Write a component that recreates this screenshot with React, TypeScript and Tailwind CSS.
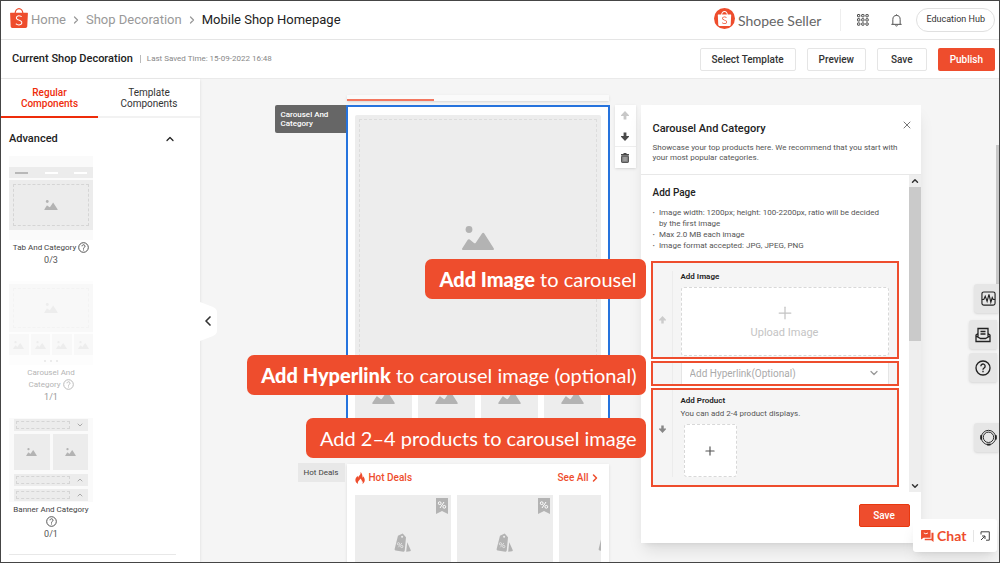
import type { ReactNode } from "react";
import { ChevronDown, ChevronLeft, ChevronRight, ChevronUp, Plus, X } from "lucide-react";
import { SiShopee } from "react-icons/si";

function ImageGlyph({ className }: { className: string }) {
  return (
    <svg viewBox="0 0 32 24" className={className} fill="currentColor" aria-hidden="true">
      <circle cx="7" cy="3.5" r="3.4" />
      <path d="M1.2 24c-1 0-1.5-.9-.9-1.700L5.600 14c.6-.9 1.300-1 2.100-.4L12 17c.7.5 1.300.4 1.800-.3l6.200-9.200c.7-1 1.700-1 2.300 0l9.400 14.700c.6.900.1 1.800-.9 1.800z" />
    </svg>
  );
}

function ArrowGlyph({ className }: { className: string }) {
  return (
    <svg viewBox="0 0 8 9" className={className} fill="currentColor" aria-hidden="true">
      <path d="M4 0L8 4.300V5H5.400V8.600H2.600V5H0V4.300z" />
    </svg>
  );
}

function TrashGlyph() {
  return (
    <svg viewBox="0 0 8 10" className="h-[10px] w-2" aria-hidden="true">
      <path d="M2.500 0h3v1H8v1.500H0V1h2.500z" fill="#4a4a4a" />
      <rect x="0.600" y="3" width="6.800" height="6.400" rx="0.500" fill="#888" stroke="#4a4a4a" />
      <path d="M2.300 5h3.400M2.300 7h3.400" stroke="#bbb" strokeWidth="0.800" />
    </svg>
  );
}

function HelpGlyph({ className }: { className: string }) {
  return (
    <svg viewBox="0 0 24 24" className={className} fill="none" stroke="currentColor" strokeWidth="2" aria-hidden="true">
      <circle cx="12" cy="12" r="10.500" />
      <path d="M8.800 9.300a3.200 3.200 0 1 1 5 2.600c-1.100.8-1.800 1.200-1.800 2.600" />
      <path d="M12 16.300v2.200" />
    </svg>
  );
}

function SaleTag() {
  return (
    <svg viewBox="0 0 18 22" className="h-[21px] w-[17px]" aria-hidden="true">
      <path d="M4.200 2.800L9.200.4l3.500 4-1.300 14.100c-.1.900-.6 1.300-1.400 1.200l-8.300-1.400c-.8-.1-1.200-.7-1-1.500z" fill="#b3b3b3" />
      <circle cx="8.600" cy="3.800" r="1.100" fill="#ededed" />
      <path d="M12.900 19.700L14 9.600l3.700 8.200c.3.700 0 1.200-.7 1.300z" fill="#b3b3b3" />
      <circle cx="4.700" cy="11.300" r="1.200" fill="none" stroke="#ededed" strokeWidth=".8" />
      <circle cx="8.200" cy="14.200" r="1.200" fill="none" stroke="#ededed" strokeWidth=".8" />
      <path d="M8.400 10.500L4.600 15" stroke="#ededed" strokeWidth=".8" />
    </svg>
  );
}

function SaleBadge() {
  return (
    <svg viewBox="0 0 12 16" className="h-4 w-3" aria-hidden="true">
      <path d="M0 0h12v16l-6-3-6 3z" fill="#b3b3b3" />
      <g fill="none" stroke="#fff" strokeWidth="1">
        <circle cx="3.700" cy="5.200" r="1.400" />
        <circle cx="8.300" cy="8.800" r="1.400" />
        <path d="M8 4L4 10" />
      </g>
    </svg>
  );
}

function FlameGlyph() {
  return (
    <svg viewBox="0 0 20 24" className="h-3 w-[10px]" fill="#ee4d2d" aria-hidden="true">
      <path d="M11 0c.8 3.500-.6 5.500-2.600 7.500C7.400 8.600 6.700 9.800 6.600 11 5.600 10.200 5.200 9 5.400 7.600 2 10.600.6 13.600.8 16.700 1 20 3 22.600 6.200 24c-1.400-3 .1-5.400 2.300-7.500 1.300-1.300 1.700-2.500 1.500-3.700 2.900 1.700 4.300 4.100 3.900 7 .7-.4 1.100-1 1.300-1.800.7 2 .3 4.300-.6 6 3.200-1.500 5-4.500 4.900-7.900-.1-3-1.500-5-2.600-7.500-.3 1.300-.8 2.200-1.800 2.900C15.300 6.900 14 2.500 11 0z" />
    </svg>
  );
}

function TopBar() {
  return (
    <header className="flex h-[39px] shrink-0 items-center border-b border-[#e5e5e5] bg-white pr-1 pl-2">
      <SiShopee className="mb-[5px] size-5 text-[#ee4d2d]" />
      <nav aria-label="Breadcrumb" className="ml-0.5 flex items-center gap-1 text-[13px] text-[#999]">
        <a href="#home">Home</a>
        <ChevronRight className="size-3" strokeWidth={2.500} />
        <a href="#decoration">Shop Decoration</a>
        <ChevronRight className="size-3" strokeWidth={2.500} />
        <span className="text-[#222]">Mobile Shop Homepage</span>
      </nav>
      <div className="ml-auto flex items-center">
        <span className="mb-[3px] flex size-[21px] items-center justify-center rounded-full bg-[#ee4d2d]">
          <SiShopee className="size-[15px] text-white" />
        </span>
        <span className="ml-[3px] font-[Lato] text-[14px] text-[#666]">Shopee Seller</span>
        <span className="ml-[19px] h-[22px] w-px bg-[#eee]" />
        <button type="button" aria-label="Apps" className="ml-4">
          <svg viewBox="0 0 12 12" className="size-3" fill="none" stroke="#444" aria-hidden="true">
            {[0.5, 4.7, 8.900].map((y) =>
              [0.5, 4.7, 8.900].map((x) => <rect key={`${x}-${y}`} x={x} y={y} width="2.300" height="2.300" rx="0.400" />),
            )}
          </svg>
        </button>
        <button type="button" aria-label="Notifications" className="ml-[22px]">
          <svg viewBox="0 0 12 14" className="h-[13px] w-[11px]" fill="none" stroke="#444" aria-hidden="true">
            <path d="M6 .3v1M.4 11.200h11.200M2 11V6a4 4.500 0 0 1 8 0v5M4.800 12.500q1.200 1 2.400 0" />
          </svg>
        </button>
        <button type="button" className="ml-[14px] h-6 rounded-full border border-[#e0e0e0] px-[9px] text-[9px] text-[#333]">
          Education Hub
        </button>
      </div>
    </header>
  );
}

function ActionBar() {
  const plain = "h-[23px] rounded-[2px] border border-[#e5e5e5] bg-white text-[10px] font-medium text-[#333]";
  return (
    <div className="flex h-[39px] shrink-0 items-center border-b border-[#eaeaea] bg-white pr-1 pl-[11px]">
      <h1 className="text-[11px] font-medium text-[#222]">Current Shop Decoration</h1>
      <span className="ml-[7px] h-2 w-px bg-[#bbb]" />
      <span className="ml-1.5 text-[8px] text-[#888]">Last Saved Time: 15-09-2022 16:48</span>
      <div className="ml-auto flex items-center gap-[11px]">
        <button type="button" className={`${plain} px-[11px]`}>Select Template</button>
        <button type="button" className={`${plain} px-[11px]`}>Preview</button>
        <button type="button" className={`${plain} px-[13px]`}>Save</button>
        <button type="button" className="h-[23px] rounded-[2px] bg-[#ee4d2d] px-3 text-[10px] font-medium text-white">
          Publish
        </button>
      </div>
    </div>
  );
}

function TabThumb() {
  return (
    <div className="flex h-[84px] flex-col gap-0.5 bg-[#fafafa] pt-[11px] pb-2.5">
      <div className="flex h-[11px] items-center justify-between bg-[#ececec] px-1.5">
        <span className="h-0.5 w-[13px] bg-[#b8b8b8]" />
        <span className="h-0.5 w-[13px] bg-white" />
        <span className="h-0.5 w-[13px] bg-white" />
      </div>
      <div className="flex-1 bg-[#ececec] p-1">
        <div className="flex h-full items-center justify-center border border-dashed border-[#d5d5d5]">
          <ImageGlyph className="h-2.5 w-[14px] text-[#b3b3b3]" />
        </div>
      </div>
    </div>
  );
}

function CarouselThumb() {
  return (
    <div className="flex h-[84px] flex-col gap-0.5 bg-[#fafafa] pt-[3px] opacity-35">
      <div className="h-12 bg-[#ececec] p-1">
        <div className="flex h-full items-center justify-center border border-dashed border-[#ddd]">
          <ImageGlyph className="h-2.5 w-[14px] text-[#ccc]" />
        </div>
      </div>
      <div className="grid h-[21px] grid-cols-4 gap-0.5">
        {[0, 1, 2, 3].map((n) => (
          <div key={n} className="flex items-center justify-center bg-[#ececec]">
            <ImageGlyph className="h-2 w-[11px] text-[#ccc]" />
          </div>
        ))}
      </div>
      <div className="flex flex-1 items-center justify-center gap-1">
        {[0, 1, 2].map((n) => (
          <span key={n} className="size-0.5 rounded-full bg-[#bbb]" />
        ))}
      </div>
    </div>
  );
}

function BannerRow({ open }: { open?: boolean }) {
  return (
    <div className="flex h-3 items-center gap-1 bg-[#ececec] px-0.5">
      <div className="h-2 flex-1 border border-dashed border-[#d5d5d5]" />
      <div className="flex w-3 justify-center text-[#aaa]">
        {open ? <ChevronDown className="size-2" strokeWidth={3} /> : <ChevronUp className="size-2" strokeWidth={3} />}
      </div>
    </div>
  );
}

function BannerThumb() {
  return (
    <div className="flex h-[84px] flex-col justify-between bg-[#fafafa] px-[5px] py-px">
      <BannerRow open />
      <div className="grid h-9 grid-cols-2 gap-[3px]">
        {[0, 1].map((n) => (
          <div key={n} className="flex items-center justify-center bg-[#ececec]">
            <ImageGlyph className="h-2 w-[11px] text-[#b3b3b3]" />
          </div>
        ))}
      </div>
      <BannerRow />
      <BannerRow />
    </div>
  );
}

function Component({ thumb, label, count, faded }: { thumb: ReactNode; label: string; count: string; faded?: boolean }) {
  return (
    <li className="w-[84px]">
      {thumb}
      <p className={`mt-0.5 px-0.5 text-center text-[8px] leading-3 ${faded ? "text-[#b5b5b5]" : "text-[#444]"}`}>
        {label} <HelpGlyph className="inline size-[11px] align-[-3px]" />
      </p>
      <p className={`text-center text-[9px] leading-3 ${faded ? "text-[#999]" : "text-[#555]"}`}>{count}</p>
    </li>
  );
}

function Sidebar() {
  const tab = "h-[39px] border-b-2 px-4 text-center text-[10px] leading-[11px]";
  return (
    <aside className="relative w-[199px] shrink-0 bg-white shadow-sm">
      <div role="tablist" className="grid grid-cols-[97px_1fr]">
        <button role="tab" aria-selected="true" type="button" className={`${tab} border-[#ee2c0a] font-medium text-[#ee2c0a]`}>
          Regular Components
        </button>
        <button role="tab" aria-selected="false" type="button" className={`${tab} border-[#f2f2f2] text-[#333]`}>
          Template Components
        </button>
      </div>
      <section className="ml-2 w-[167px] border-b border-[#e8e8e8] pt-[13px] pb-[14px]">
        <button type="button" className="flex w-full items-center justify-between text-[11px] leading-4 font-medium text-[#222]">
          Advanced
          <ChevronUp className="size-3" strokeWidth={2.500} />
        </button>
        <ul className="mt-[9px] flex flex-col gap-[15px]">
          <Component thumb={<TabThumb />} label="Tab And Category" count="0/3" />
          <Component thumb={<CarouselThumb />} label="Carousel And Category" count="1/1" faded />
          <Component thumb={<BannerThumb />} label="Banner And Category" count="0/1" />
        </ul>
      </section>
      <button type="button" aria-label="Collapse components" className="absolute top-[222px] left-full">
        <svg viewBox="0 0 17 41" className="h-[41px] w-[17px]" aria-hidden="true">
          <path d="M0 1l13 5q4 2 4 5v19q0 3-4 5L0 40z" fill="#fff" />
        </svg>
        <ChevronLeft className="absolute top-3 left-0 size-4 text-[#333]" strokeWidth={2.500} />
      </button>
    </aside>
  );
}

function Phone() {
  return (
    <div className="ml-[71px] w-[264px] shrink-0 pt-4">
      <div className="mx-px h-[6px] bg-[#fafafa] shadow-sm">
        <div className="h-full w-[87px] border-b-2 border-[#f4775f]" />
      </div>
      <section className="relative mt-1 border-2 border-[#2673dd] bg-white px-[7px] pt-2 pb-8">
        <h2 className="absolute top-[-2px] right-full mr-0.5 flex h-7 w-[71px] items-center rounded-l-[2px] bg-[#666] px-1.5 text-[8px] leading-[9px] font-medium text-white">
          Carousel And Category
        </h2>
        <div className="aspect-square rounded-[2px] bg-[#ededed] p-1">
          <div className="flex h-full items-center justify-center border border-dashed border-[#ddd]">
            <ImageGlyph className="h-6 w-8 text-[#b3b3b3]" />
          </div>
        </div>
        <div className="mt-1.5 grid grid-cols-4 gap-1.5">
          {[0, 1, 2, 3].map((n) => (
            <div key={n} className="flex aspect-square items-center justify-center bg-[#ededed]">
              <ImageGlyph className="h-[17px] w-[23px] text-[#b3b3b3]" />
            </div>
          ))}
        </div>
      </section>
      <section className="relative mx-px mt-1.5 bg-white px-2 pb-10 shadow-sm">
        <span className="absolute top-[-1px] right-full mr-0.5 flex h-[19px] w-[47px] items-center justify-center bg-[#e8e8e8] text-[8px] text-[#444]">
          Hot Deals
        </span>
        <div className="flex h-[31px] items-center justify-between pb-1 text-[10px] font-medium text-[#ee4d2d]">
          <h2 className="flex items-center gap-1">
            <FlameGlyph />
            Hot Deals
          </h2>
          <a href="#deals" className="flex items-center">
            See All
            <ChevronRight className="size-3" strokeWidth={3} />
          </a>
        </div>
        <div className="flex gap-1.5 overflow-hidden">
          {[0, 1, 2].map((n) => (
            <div key={n} className="relative flex size-24 shrink-0 items-center justify-center bg-[#ededed]">
              <SaleTag />
              <div className="absolute top-[3px] right-[3px]">
                <SaleBadge />
              </div>
            </div>
          ))}
        </div>
      </section>
    </div>
  );
}

function Tools() {
  return (
    <div className="mt-[26px] ml-[5px] flex h-[63px] w-[21px] shrink-0 flex-col bg-white shadow">
      <button type="button" aria-label="Move up" className="flex flex-1 items-center justify-center text-[#c8c8c8]">
        <ArrowGlyph className="h-[9px] w-2" />
      </button>
      <button type="button" aria-label="Move down" className="flex flex-1 items-center justify-center text-[#4a4a4a]">
        <ArrowGlyph className="h-[9px] w-2 rotate-180" />
      </button>
      <button type="button" aria-label="Delete" className="flex flex-1 items-center justify-center border-t border-[#eee]">
        <TrashGlyph />
      </button>
    </div>
  );
}

function Callout({ className, children }: { className: string; children: ReactNode }) {
  return (
    <p
      className={`absolute right-full mr-[7px] flex h-10 items-center rounded-[7px] bg-[#ee4d2d] pr-[9px] pl-[14px] font-[Lato] text-[20px] whitespace-pre text-white ${className}`}
    >
      {children}
    </p>
  );
}

function Panel() {
  const frame = "relative flex border-2 border-[#ee4d2d] bg-[#f5f5f5]";
  return (
    <div className="mt-[26px] ml-[5px] w-[280px] shrink-0 self-start bg-white shadow-lg">
      <div className="relative h-[70px] border-b border-[#e8e8e8] px-3 pt-4">
        <h2 className="text-[11px] leading-4 font-medium text-[#222]">Carousel And Category</h2>
        <p className="mt-1.5 text-[8px] leading-[10px] text-[#555]">
          Showcase your top products here. We recommend that you start with your most popular categories.
        </p>
        <button type="button" aria-label="Close" className="absolute top-[14px] right-2 text-[#777]">
          <X className="size-3" strokeWidth={2} />
        </button>
      </div>
      <div className="flex">
        <div className="flex-1 pr-2.5 pb-[5px] pl-2.5">
          <h3 className="mt-2.5 ml-0.5 text-[10px] leading-4 font-medium text-[#222]">Add Page</h3>
          <ul className="mt-1.5 mb-2.5 ml-0.5 pr-[14px] text-[8px] leading-[11px] text-[#555]">
            {[
              "Image width: 1200px; height: 100-2200px, ratio will be decided by the first image",
              "Max 2.0 MB each image",
              "Image format accepted: JPG, JPEG, PNG",
            ].map((line) => (
              <li key={line} className="flex gap-1">
                <b>·</b>
                {line}
              </li>
            ))}
          </ul>
          <div className="flex flex-col gap-0.5">
            <section className={`${frame} h-[98px] pt-2`}>
              <Callout className="top-[-4px]">
                <b className="font-black">Add Image</b> to carousel
              </Callout>
              <div className="flex w-5 items-center justify-center border-r border-[#ececec] text-[#ccc]">
                <ArrowGlyph className="mt-3 h-2 w-[7px]" />
              </div>
              <div className="flex flex-1 flex-col pr-2 pl-2">
                <h4 className="text-[8px] leading-3 font-semibold text-[#222]">Add Image</h4>
                <button
                  type="button"
                  className="mt-1 mb-px flex flex-1 flex-col items-center justify-center rounded-[3px] border border-dashed border-[#d8d8d8] bg-white text-[11px] leading-4 text-[#c4c4c4]"
                >
                  <Plus className="mb-0.5 size-5" strokeWidth={1.500} />
                  Upload Image
                </button>
              </div>
            </section>
            <section className={`${frame} h-[25px]`}>
              <Callout className="top-[-8px]">
                <b className="font-black">Add Hyperlink</b> to carousel image (optional)
              </Callout>
              <div className="w-5 border-r border-[#ececec]" />
              <div className="relative mx-2 flex h-[21px] flex-1 items-center overflow-hidden border-x border-[#e5e5e5] bg-white">
                <select
                  aria-label="Hyperlink"
                  className="h-4 w-full appearance-none bg-white px-2 text-[10px] leading-4 text-[#aaa]"
                >
                  <option>Add Hyperlink(Optional)</option>
                </select>
                <ChevronDown className="pointer-events-none absolute top-1 right-2 size-3 text-[#999]" strokeWidth={2.500} />
              </div>
            </section>
            <section className={`${frame} h-[99px] pb-2`}>
              <Callout className="top-7">Add 2–4 products to carousel image</Callout>
              <div className="flex w-5 justify-center border-r border-[#ececec] pt-[35px] text-[#888]">
                <ArrowGlyph className="h-2 w-[7px] rotate-180" />
              </div>
              <div className="px-2 pt-[5px]">
                <h4 className="text-[8px] leading-3 font-semibold text-[#222]">Add Product</h4>
                <p className="text-[8px] leading-[13px] text-[#555]">You can add 2-4 product displays.</p>
                <button
                  type="button"
                  aria-label="Add product"
                  className="mt-1 ml-[3px] flex size-[53px] items-center justify-center rounded-[3px] border border-dashed border-[#d8d8d8] bg-white text-[#555]"
                >
                  <Plus className="size-[14px]" strokeWidth={2} />
                </button>
              </div>
            </section>
          </div>
        </div>
        <div className="flex w-3 shrink-0 flex-col items-center bg-[#eee] text-[#333]">
          <ChevronUp className="my-px size-2.5" strokeWidth={3.500} />
          <div className="h-[154px] w-full bg-[#cacaca]" />
          <ChevronDown className="mt-auto mb-px size-2.5" strokeWidth={3.500} />
        </div>
      </div>
      <div className="flex h-[51px] items-start justify-end pt-3 pr-[11px]">
        <button type="button" className="h-[23px] w-[51px] rounded-[2px] border border-[#e8380f] bg-[#ee4d2d] text-[10px] font-medium text-white">
          Save
        </button>
      </div>
    </div>
  );
}

function FloatingControls() {
  const square = "flex h-[29px] items-center justify-center rounded-l-[3px] bg-[#e6e6e6] text-[#222] shadow-sm";
  return (
    <div className="absolute right-0 bottom-2.5 flex flex-col items-end">
      <button type="button" aria-label="Shop health" className={`${square} w-[25px]`}>
        <svg viewBox="0 0 16 16" className="ml-1 size-[15px]" fill="none" stroke="currentColor" strokeWidth="1.200" aria-hidden="true">
          <rect x="1" y="1" width="14" height="14" rx="2" />
          <path d="M1 9h2l1.500-3.500L6.500 11 8.500 3.500l2 8.500L12 7l1 2h2" />
        </svg>
      </button>
      <button type="button" aria-label="Messages" className={`${square} mt-[7px] mr-0.5 w-7`}>
        <svg viewBox="0 0 16 16" className="size-4" fill="none" stroke="currentColor" strokeWidth="1.300" aria-hidden="true">
          <path d="M3 6.500L1 8v6.500h14V8l-2-1.500M1 9l4.500 2.500h5L15 9M3 9.500V1.500h10v8M5.500 4.500h5M5.500 7h5" />
        </svg>
      </button>
      <button type="button" aria-label="Help" className={`${square} mt-1 mr-0.5 w-7`}>
        <HelpGlyph className="size-4" />
      </button>
      <button type="button" aria-label="Customer service" className={`${square} mt-[41px] w-[25px]`}>
        <svg viewBox="0 0 18 18" className="ml-1 size-[17px]" fill="none" stroke="currentColor" aria-hidden="true">
          <circle cx="9" cy="9" r="7.600" />
          <circle cx="9" cy="8.800" r="5.500" />
          <path d="M1.200 6.500v4.500M16.800 6.500v4.500" strokeWidth="2" />
          <path d="M7.500 16.500h3.500" strokeWidth="2" />
        </svg>
      </button>
      <div className="mt-[67px] mr-0.5 flex h-[33px] w-[84px] items-center rounded-[3px] bg-white pr-[7px] pl-2 shadow-lg">
        <button type="button" className="flex items-center gap-[3px] font-[Lato] text-[14px] font-bold text-[#ee4d2d]">
          <svg viewBox="0 0 14 13" className="h-3 w-[13px]" fill="currentColor" aria-hidden="true">
            <path d="M.5 0h9.800v8.500H2.800L0 10.300V.5zM11.300 3H13.500v10l-2.300-1.800H4V9.500h7.300z" />
            <path d="M3 3.200q2.200 1.800 4.500 0" stroke="#fff" fill="none" />
          </svg>
          Chat
        </button>
        <span className="ml-auto h-3 w-px bg-[#e5e5e5]" />
        <button type="button" aria-label="Expand chat" className="ml-1.5">
          <svg viewBox="0 0 10 10" className="size-2.5" fill="none" stroke="#444" aria-hidden="true">
            <path d="M1 3.500V.8h8.300v8.400H6M1 9l4-4M2 5h3v3" />
          </svg>
        </button>
      </div>
    </div>
  );
}

export default function App() {
  return (
    <div className="relative flex h-screen flex-col overflow-hidden border border-[#454545] bg-[#f5f5f5] font-[Roboto,sans-serif]">
      <TopBar />
      <ActionBar />
      <div className="relative flex min-h-0 flex-1">
        <Sidebar />
        <main className="flex flex-1 justify-center pr-1">
          <Phone />
          <Tools />
          <Panel />
        </main>
        <div className="absolute top-[66px] right-0 h-[150px] w-[3px] bg-[#c8c8c8]" />
      </div>
      <FloatingControls />
    </div>
  );
}
